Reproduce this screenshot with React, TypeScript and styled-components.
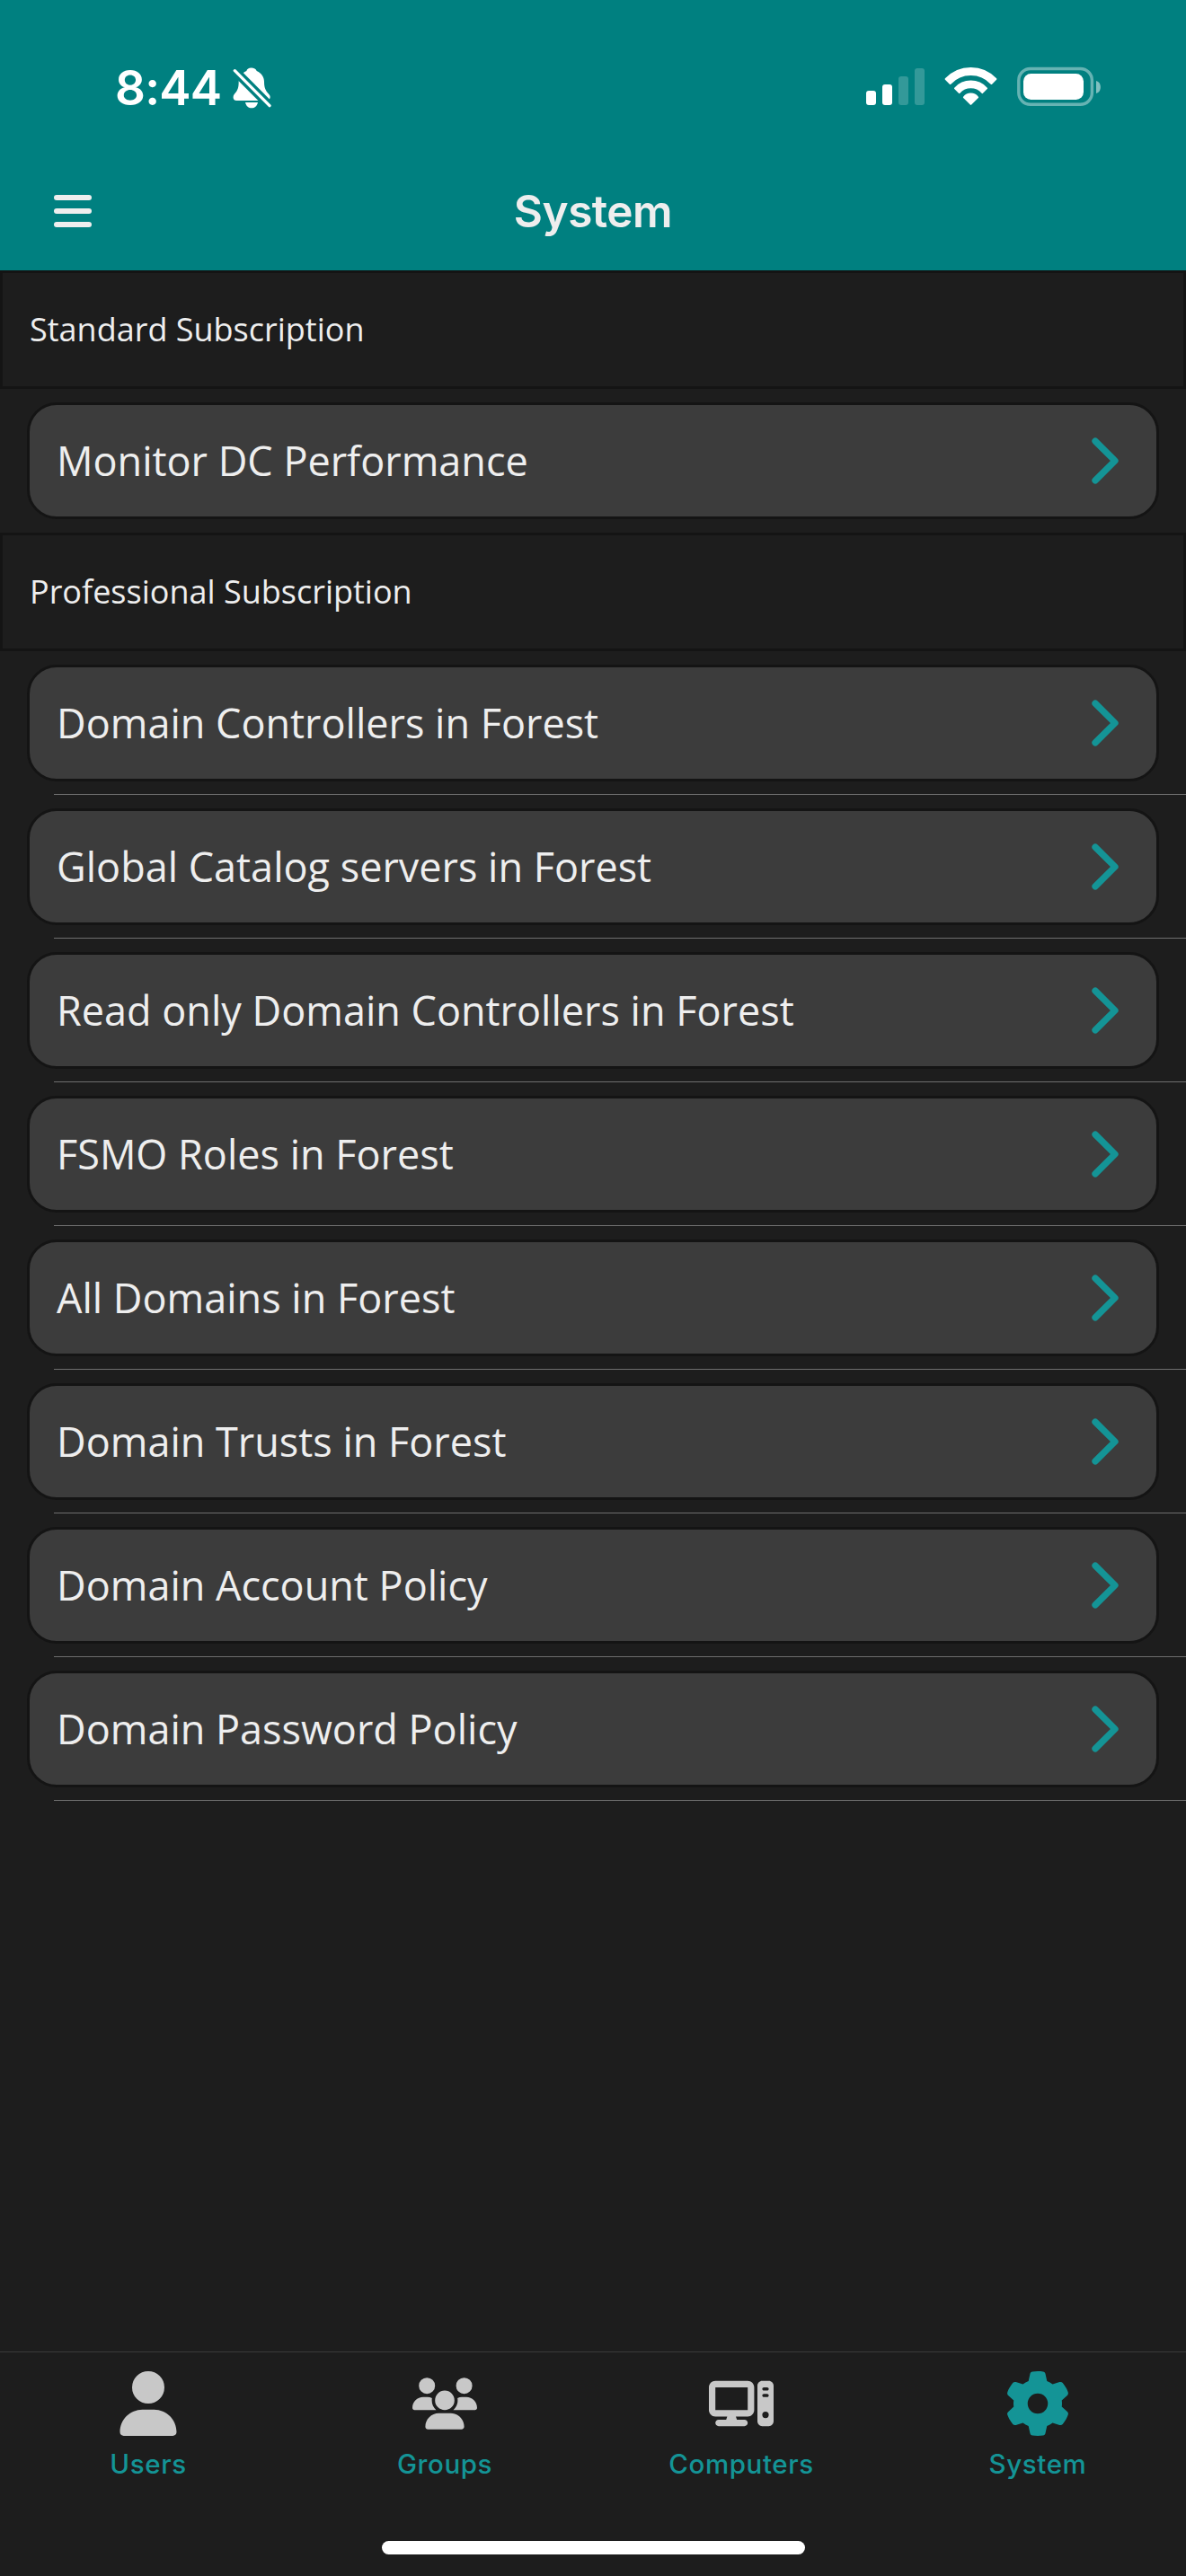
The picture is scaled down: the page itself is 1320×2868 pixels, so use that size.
import React from "react";
import styled, { createGlobalStyle } from "styled-components";
import { FaUser, FaUsers, FaComputer, FaGear } from "react-icons/fa6";

const color = {
  teal: "#008080",
  accent: "#149496",
  page: "#1d1d1d",
  card: "#3c3c3c",
  edge: "#141414",
  text: "#eeeeee",
  icon: "#c8c8c8",
};

const GlobalStyle = createGlobalStyle`
  * { box-sizing: border-box; }
  body { margin: 0; background: ${color.page}; }
`;

const Screen = styled.div`
  display: flex;
  flex-direction: column;
  width: 1320px;
  height: 2868px;
  overflow: hidden;
  background: ${color.page};
  color: ${color.text};
  font-family: "Open Sans", "Noto Sans", sans-serif;
`;

const TopArea = styled.header`
  flex: none;
  height: 301px;
  background: ${color.teal};
  font-family: Inter, "Liberation Sans", sans-serif;
`;

const StatusBar = styled.div`
  display: flex;
  justify-content: space-between;
  height: 169px;
  padding: 74px 94px 0 128px;
`;

const StatusGroup = styled.div`
  display: flex;
  align-items: flex-start;
`;

const Clock = styled.span`
  width: 131px;
  font-size: 53px;
  font-weight: 600;
  line-height: 48px;
  letter-spacing: -0.8px;
  color: #fff;
  white-space: nowrap;
`;

const NavBar = styled.div`
  display: grid;
  grid-template-columns: 1fr auto 1fr;
  align-items: center;
  height: 132px;
  padding: 0 60px;
`;

const MenuButton = styled.button`
  display: flex;
  flex-direction: column;
  gap: 9px;
  width: 42px;
  padding: 0;
  border: 0;
  background: none;
`;

const MenuLine = styled.span`
  height: 6px;
  border-radius: 3px;
  background: ${color.text};
`;

const Title = styled.h1`
  margin: 0;
  font-size: 49.5px;
  font-weight: 600;
  line-height: 60px;
  letter-spacing: -0.5px;
`;

const Content = styled.main`
  flex: 1;
`;

const SectionHeader = styled.h2`
  display: flex;
  align-items: center;
  height: 132px;
  margin: 0;
  padding: 0 30px;
  border: 3px solid ${color.edge};
  font-size: 36px;
  font-weight: 400;
  line-height: 48px;
`;

const Row = styled.div<{ $divided: boolean }>`
  height: 160px;
  padding: 15px 30px 14px;
  background: ${(p) =>
    p.$divided
      ? "linear-gradient(#6e6e6e, #6e6e6e) 60px 100% / 100% 1px no-repeat"
      : "none"};
`;

const Card = styled.div`
  display: flex;
  align-items: center;
  justify-content: space-between;
  height: 130px;
  padding: 0 18px 0 30px;
  border: 3px solid ${color.edge};
  border-radius: 33px;
  background: ${color.card};
  font-size: 45px;
  line-height: 60px;
`;

const TabBar = styled.nav`
  display: grid;
  grid-template-columns: repeat(4, 1fr);
  flex: none;
  height: 211px;
  border-top: 1px solid #3a3a3a;
`;

const Tab = styled.div<{ $active: boolean }>`
  display: flex;
  flex-direction: column;
  align-items: center;
  padding-top: 21px;
  color: ${(p) => (p.$active ? color.accent : color.icon)};
`;

const TabIcon = styled.span`
  display: flex;
  align-items: center;
  justify-content: center;
  width: 72px;
  height: 72px;
`;

const TabLabel = styled.span`
  margin-top: 13px;
  font-family: Inter, "Liberation Sans", sans-serif;
  font-size: 29.5px;
  font-weight: 500;
  line-height: 36px;
  letter-spacing: 0.6px;
  color: ${color.accent};
`;

const HomeArea = styled.div`
  display: flex;
  justify-content: center;
  flex: none;
  height: 39px;
`;

const HomeIndicator = styled.div`
  width: 471px;
  height: 15px;
  border-radius: 7.5px;
  background: #fff;
`;

const BellOff = () => (
  <svg width="43" height="47" viewBox="-1 -3 129 141">
    <path
      fill="#fff"
      d="M61 1.5C52 1.5 47 6 45 12C28 20 20 32 19 47C19 66 17 75 4 90C-2 98 0 111 12 111H110C124 111 128 98 120 90C107 75 104 66 104 47C103 32 96 20 79 12C77 6 70 1.5 61 1.5Z"
    />
    <path stroke={color.teal} strokeWidth="30" d="M-9 -4L137 143" />
    <path stroke="#fff" strokeWidth="10" strokeLinecap="round" d="M6 11L122 128" />
    <path fill="#fff" d="M41 117H83C80 130 72 136 62 136S44 130 41 117Z" />
  </svg>
);

const StatusIcons = () => (
  <svg width="262" height="46" viewBox="964 74 262 46" fill="#fff">
    <rect x="964" y="101" width="11" height="16" rx="3" />
    <rect x="982" y="94" width="11" height="23" rx="3" />
    <rect x="1000" y="85" width="11" height="32" rx="3" opacity="0.2" />
    <rect x="1018" y="76" width="11" height="41" rx="3" opacity="0.2" />
    <g transform="translate(1051.7 75)" stroke="#fff" strokeWidth="2" strokeLinejoin="round">
      <path d="M0.93 13.03A38.3 38.3 0 0 1 56.67 13.03L51.72 17.98A31.3 31.3 0 0 0 5.88 17.98Z" />
      <path d="M11.26 23.36A23.7 23.7 0 0 1 46.34 23.36L41.6 28.1A17 17 0 0 0 16 28.1Z" />
      <path d="M21.19 33.29A9.7 9.7 0 0 1 36.41 33.29L28.8 40.9Z" />
    </g>
    <rect x="1133.8" y="76.5" width="81.6" height="39.8" rx="13" fill="none" stroke="#fff" strokeWidth="3.4" opacity="0.4" />
    <rect x="1139" y="82" width="67" height="29" rx="8.5" />
    <path d="M1220 90C1226.500 91.500 1226.500 102.500 1220 104Z" opacity="0.5" />
  </svg>
);

const Chevron = () => (
  <svg width="78" height="78" viewBox="0 0 512 512" fill="none">
    <path
      d="M184 112l144 144-144 144"
      stroke={color.accent}
      strokeWidth="48"
      strokeLinecap="round"
      strokeLinejoin="round"
    />
  </svg>
);

const sections = [
  { title: "Standard Subscription", divided: false, items: ["Monitor DC Performance"] },
  {
    title: "Professional Subscription",
    divided: true,
    items: [
      "Domain Controllers in Forest",
      "Global Catalog servers in Forest",
      "Read only Domain Controllers in Forest",
      "FSMO Roles in Forest",
      "All Domains in Forest",
      "Domain Trusts in Forest",
      "Domain Account Policy",
      "Domain Password Policy",
    ],
  },
];

const tabs = [
  { label: "Users", icon: <FaUser size={72} />, active: false },
  { label: "Groups", icon: <FaUsers size={72} />, active: false },
  { label: "Computers", icon: <FaComputer size={72} />, active: false },
  { label: "System", icon: <FaGear size={72} />, active: true },
];

export default function App() {
  return (
    <Screen>
      <GlobalStyle />
      <TopArea>
        <StatusBar>
          <StatusGroup>
            <Clock>8:44</Clock>
            <BellOff />
          </StatusGroup>
          <StatusGroup>
            <StatusIcons />
          </StatusGroup>
        </StatusBar>
        <NavBar>
          <MenuButton aria-label="Menu">
            <MenuLine />
            <MenuLine />
            <MenuLine />
          </MenuButton>
          <Title>System</Title>
        </NavBar>
      </TopArea>
      <Content>
        {sections.map((section) => (
          <section key={section.title}>
            <SectionHeader>{section.title}</SectionHeader>
            {section.items.map((item) => (
              <Row key={item} $divided={section.divided}>
                <Card>
                  {item}
                  <Chevron />
                </Card>
              </Row>
            ))}
          </section>
        ))}
      </Content>
      <TabBar>
        {tabs.map((tab) => (
          <Tab key={tab.label} $active={tab.active}>
            <TabIcon>{tab.icon}</TabIcon>
            <TabLabel>{tab.label}</TabLabel>
          </Tab>
        ))}
      </TabBar>
      <HomeArea>
        <HomeIndicator />
      </HomeArea>
    </Screen>
  );
}
